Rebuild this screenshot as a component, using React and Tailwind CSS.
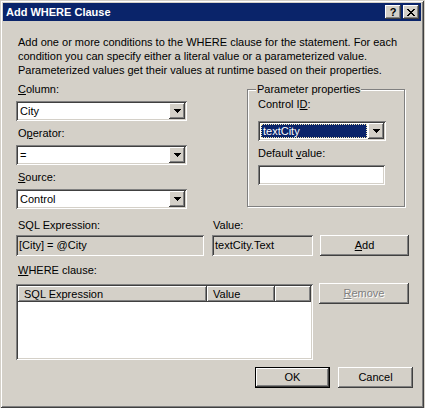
import React from 'react';

const sunken =
  'shadow-[inset_1px_1px_0_#808080,inset_-1px_-1px_0_#ffffff,inset_2px_2px_0_#404040,inset_-2px_-2px_0_#d4d0c8]';
const raised =
  'shadow-[inset_-1px_-1px_0_#404040,inset_1px_1px_0_#ffffff,inset_-2px_-2px_0_#808080,inset_2px_2px_0_#d4d0c8]';

function Key({ children }) {
  return <span className="underline underline-offset-[1px]">{children}</span>;
}

function Label({ children, className = '' }) {
  return (
    <div className={`h-[14px] leading-[14px] whitespace-nowrap ${className}`}>{children}</div>
  );
}

function Arrow() {
  return (
    <svg width="7" height="4" viewBox="0 0 7 4" shapeRendering="crispEdges">
      <rect x="0" y="0" width="7" height="1" fill="#000" />
      <rect x="1" y="1" width="5" height="1" fill="#000" />
      <rect x="2" y="2" width="3" height="1" fill="#000" />
      <rect x="3" y="3" width="1" height="1" fill="#000" />
    </svg>
  );
}

function Combo({ value, width, selected }) {
  return (
    <div className={`flex h-[20px] ${width} bg-white p-[2px] ${sunken}`}>
      {selected ? (
        <div className="flex-1 m-[1px] flex items-center pl-[1px] bg-[#0a246a] text-white border border-dotted border-[#f4e8b0] leading-none">
          {value}
        </div>
      ) : (
        <div className="flex-1 flex items-center pl-[2px] leading-none">{value}</div>
      )}
      <div className={`w-[16px] h-full bg-[#d4d0c8] flex items-center justify-center ${raised}`}>
        <Arrow />
      </div>
    </div>
  );
}

function Button({ children, width, isDefault, disabled, className = '' }) {
  return (
    <div
      className={`h-[21px] ${width} bg-[#d4d0c8] flex items-center justify-center leading-none ${raised} ${
        isDefault ? 'border border-black' : ''
      } ${disabled ? 'text-[#808080] [text-shadow:1px_1px_0_#ffffff]' : ''} ${className}`}
    >
      {children}
    </div>
  );
}

function App() {
  return (
    <div className="w-[425px] h-[408px] bg-[#d4d0c8] text-[11px] text-black font-['Liberation_Sans',Arial,sans-serif]">
      <div className="w-[424px] h-[408px] p-[3px] flex flex-col shadow-[inset_1px_1px_0_#d4d0c8,inset_-1px_-1px_0_#404040,inset_2px_2px_0_#ffffff,inset_-2px_-2px_0_#808080]">
        {/* title bar */}
        <div className="h-[18px] bg-[#0a246a] flex items-center justify-between pl-[3px] pr-[2px]">
          <span className="text-white font-bold text-[11px] leading-none">Add WHERE Clause</span>
          <div className="flex gap-[2px]">
            <div className={`w-[16px] h-[14px] bg-[#d4d0c8] flex items-center justify-center font-bold text-[11px] leading-none ${raised}`}>
              ?
            </div>
            <div className={`w-[16px] h-[14px] bg-[#d4d0c8] flex items-center justify-center ${raised}`}>
              <svg width="8" height="7" viewBox="0 0 8 7" shapeRendering="crispEdges">
                <path d="M0 0h2v1h-2zM6 0h2v1h-2zM1 1h2v1h-2zM5 1h2v1h-2zM2 2h4v1h-4zM3 3h2v1h-2zM2 4h4v1h-4zM1 5h2v1h-2zM5 5h2v1h-2zM0 6h2v1h-2zM6 6h2v1h-2z" fill="#000" />
              </svg>
            </div>
          </div>
        </div>

        <div className="flex flex-col pl-[13px] pr-[8px]">
          {/* intro */}
          <div className="mt-[14px] pl-[2px] leading-[14px] whitespace-nowrap">
            <div>Add one or more conditions to the WHERE clause for the statement. For each</div>
            <div>condition you can specify either a literal value or a parameterized value.</div>
            <div>Parameterized values get their values at runtime based on their properties.</div>
          </div>

          {/* column / operator / source + parameter properties */}
          <div className="mt-[5px] flex gap-[60px]">
            <div className="w-[171px] flex flex-col">
              <Label className="pl-[2px]">
                <Key>C</Key>olumn:
              </Label>
              <div className="mt-[5px]">
                <Combo value="City" width="w-[171px]" />
              </div>
              <Label className="pl-[2px] mt-[5px]">
                O<Key>p</Key>erator:
              </Label>
              <div className="mt-[5px]">
                <Combo value="=" width="w-[171px]" />
              </div>
              <Label className="pl-[2px] mt-[5px]">
                <Key>S</Key>ource:
              </Label>
              <div className="mt-[5px]">
                <Combo value="Control" width="w-[171px]" />
              </div>
            </div>

            <div className="relative mt-[7px] w-[158px] h-[118px] border border-[#808080] shadow-[inset_1px_1px_0_#ffffff,1px_1px_0_#ffffff] pl-[10px] pt-[7px]">
              <span className="absolute left-[8px] top-[-8px] px-[1px] bg-[#d4d0c8] h-[14px] leading-[14px] whitespace-nowrap">
                Parameter properties
              </span>
              <Label>
                Control I<Key>D</Key>:
              </Label>
              <div className="mt-[10px]">
                <Combo value="textCity" width="w-[128px]" selected />
              </div>
              <Label className="mt-[5px]">
                Default <Key>v</Key>alue:
              </Label>
              <div className={`mt-[5px] w-[127px] h-[20px] bg-white ${sunken}`} />
            </div>
          </div>

          {/* expression / value */}
          <div className="mt-[9px] flex">
            <Label className="w-[196px] pl-[2px]">SQL Expression:</Label>
            <Label className="pl-[1px]">Value:</Label>
          </div>
          <div className="mt-[3px] flex items-start">
            <div className={`w-[188px] h-[21px] bg-[#d4d0c8] flex items-center pl-[3px] leading-none ${sunken}`}>
              [City] = @City
            </div>
            <div className={`ml-[8px] w-[101px] h-[21px] bg-[#d4d0c8] flex items-center pl-[3px] leading-none ${sunken}`}>
              textCity.Text
            </div>
            <Button width="w-[89px]" className="ml-[7px]">
              <Key>A</Key>dd
            </Button>
          </div>

          {/* where clause */}
          <Label className="mt-[7px] pl-[2px]">
            <Key>W</Key>HERE clause:
          </Label>
          <div className="mt-[7px] flex items-start">
            <div className={`w-[297px] h-[76px] bg-white p-[2px] ${sunken}`}>
              <div className="flex h-[16px]">
                <div className={`w-[189px] h-full bg-[#d4d0c8] flex items-center pl-[6px] leading-none ${raised}`}>
                  SQL Expression
                </div>
                <div className={`w-[68px] h-full bg-[#d4d0c8] flex items-center pl-[6px] leading-none ${raised}`}>
                  Value
                </div>
                <div className={`flex-1 h-full bg-[#d4d0c8] ${raised}`} />
              </div>
            </div>
            <Button width="w-[90px]" className="ml-[6px] mt-[-1px]" disabled>
              <Key>R</Key>emove
            </Button>
          </div>

          {/* ok / cancel */}
          <div className="mt-[7px] flex justify-end gap-[8px]">
            <Button width="w-[75px]" isDefault>
              OK
            </Button>
            <Button width="w-[75px]">Cancel</Button>
          </div>
        </div>
      </div>
    </div>
  );
}

export default App;
